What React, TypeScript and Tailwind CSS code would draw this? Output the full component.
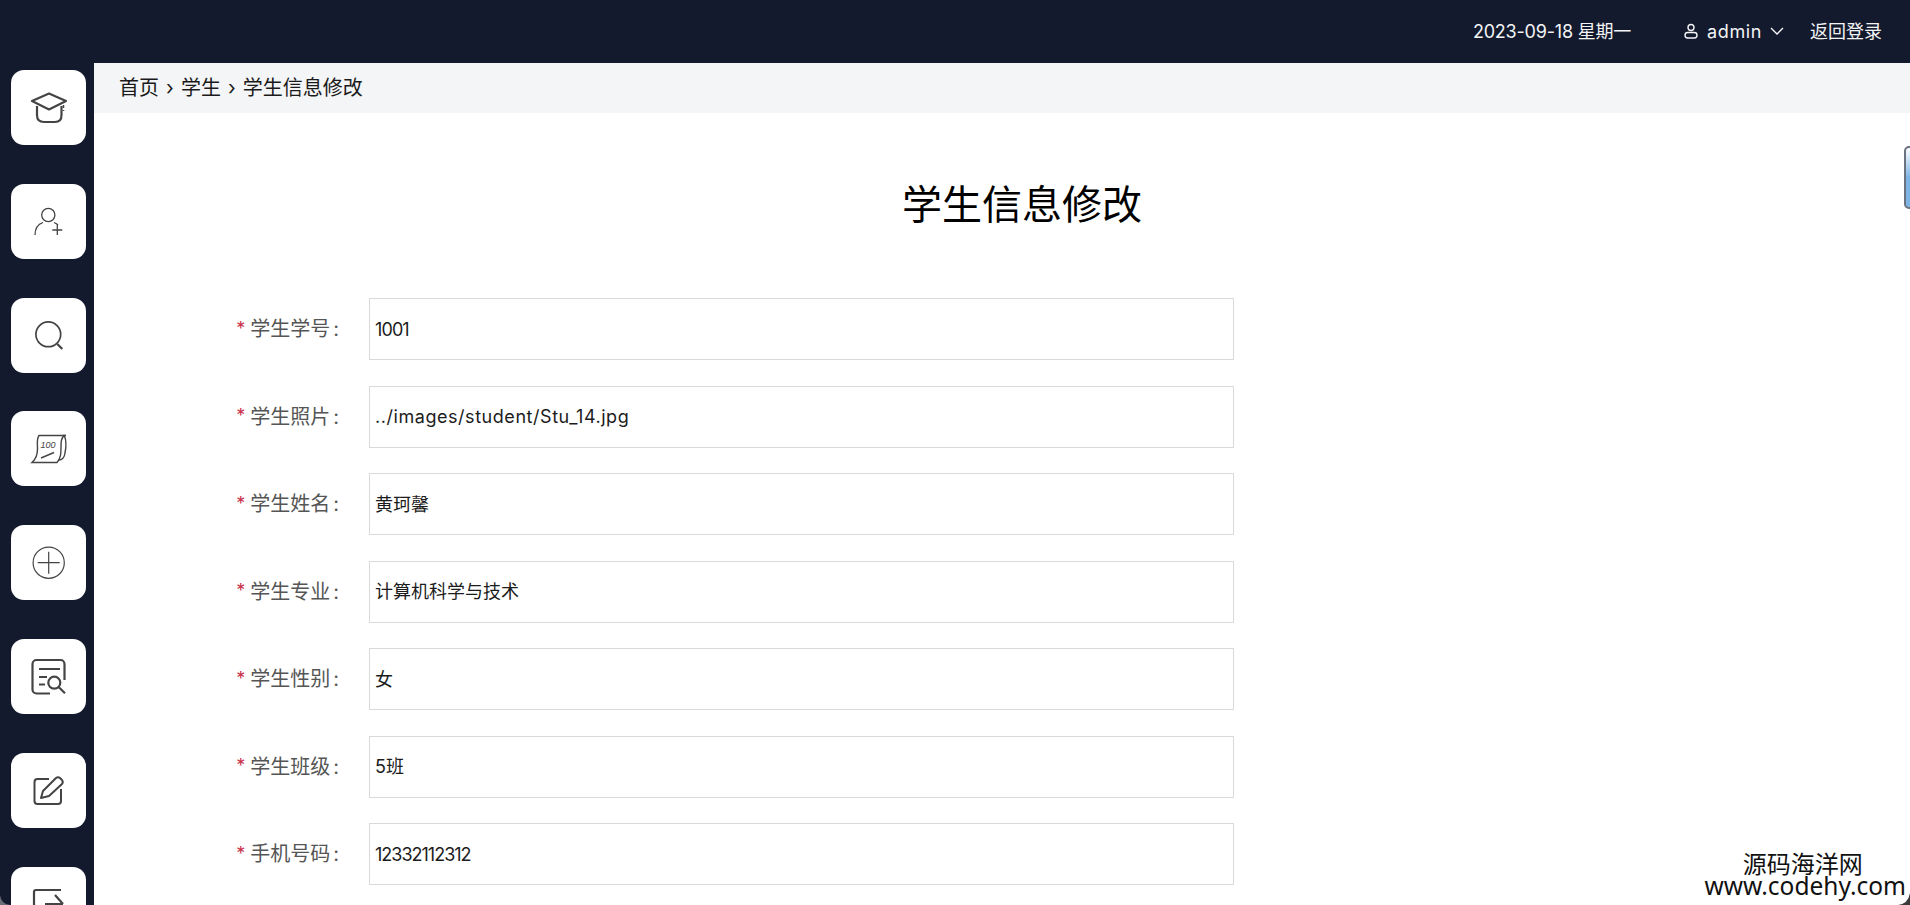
import React from 'react';

const font = 'font-["Inter","Noto_Sans_CJK_SC",sans-serif]';

const fields = [
  { label: '学生学号', value: '1001', valueClass: 'tracking-[-0.9px]' },
  { label: '学生照片', value: '../images/student/Stu_14.jpg', valueClass: 'tracking-[0.55px]' },
  { label: '学生姓名', value: '黄珂馨', valueClass: '' },
  { label: '学生专业', value: '计算机科学与技术', valueClass: '' },
  { label: '学生性别', value: '女', valueClass: '' },
  { label: '学生班级', value: '5班', valueClass: '' },
  { label: '手机号码', value: '12332112312', valueClass: 'tracking-[-1px]' },
];

const CapIcon = () => (
  <g strokeWidth="2.2">
    <path d="M38 23.5 L21 31 L38 39.5 L55 31 Z" strokeLinejoin="round" />
    <path d="M26 36 V45 Q26 52 33 52 H44 Q50.5 52 50.5 45 V36" />
    <path d="M52.5 35 V41" strokeDasharray="3 2" strokeWidth="1.5" />
  </g>
);

const UserPlusIcon = () => (
  <g strokeWidth="1.3">
    <circle cx="37.3" cy="31" r="6.6" />
    <path d="M24 51 C24 44 27.5 40 32 38.5 M43 38.5 C44.5 39.2 46 40 47 41" />
    <path d="M46.3 41 V51 M41.3 46 H51.3" />
  </g>
);

const SearchIcon = () => (
  <g strokeWidth="1.7">
    <circle cx="37.3" cy="36.3" r="12.4" />
    <path d="M46.3 46 L51.3 51" strokeWidth="2.2" />
  </g>
);

const ScrollIcon = () => (
  <g strokeWidth="1.4">
    <path d="M28 24.5 H53 C50 28 50 31 50 36 C50 42 50 47 46 51.5 H21 C25 48 26.5 44 26.5 38 C26.5 32 25.5 28 28 24.5 Z" />
    <path d="M52 24.5 H55 M53.5 25 C55.5 30 55 37 54 42 C53.5 46 52 49 47.5 49" />
    <text x="29.5" y="37" fontSize="9" fontStyle="italic" fill="#444" stroke="none" fontFamily="Liberation Sans, sans-serif">100</text>
    <path d="M30 47 L43 41.5" />
  </g>
);

const PlusCircleIcon = () => (
  <g strokeWidth="1.2">
    <circle cx="37.7" cy="37.7" r="15.6" />
    <path d="M37.7 26.7 V48.7 M26.7 37.7 H48.7" />
  </g>
);

const DocSearchIcon = () => (
  <g strokeWidth="2.2">
    <path d="M53.5 41 V25 a4 4 0 0 0 -4 -4 H25.5 a4 4 0 0 0 -4 4 V50.5 a4 4 0 0 0 4 4 H39" />
    <path d="M28 30 H49 M28 38 H36 M28 45.5 H34" />
    <circle cx="43.3" cy="43.7" r="6" />
    <path d="M47.6 48 L54 54.3" />
  </g>
);

const EditIcon = () => (
  <g strokeWidth="2">
    <path d="M38 26 H26.5 a3 3 0 0 0 -3 3 V48 a3 3 0 0 0 3 3 H47 a3 3 0 0 0 3 -3 V36" />
    <path d="M30 45 L32 38 L45 25 Q47 23.5 49 25 L51 27 Q52.5 29 51 31 L38 43 Z" strokeLinejoin="round" />
  </g>
);

const ExportIcon = () => (
  <g strokeWidth="2.2">
    <path d="M50 23 H25 a2 2 0 0 0 -2 2 V60" />
    <path d="M44 28 L52 37 M34 37 H52" />
  </g>
);

const sideIcons = [CapIcon, UserPlusIcon, SearchIcon, ScrollIcon, PlusCircleIcon, DocSearchIcon, EditIcon, ExportIcon];

export default function App() {
  return (
    <div className={`relative flex h-[905px] w-[1910px] flex-col overflow-hidden bg-[#141a2d] ${font}`}>
      {/* Top bar */}
      <header className="flex h-[63px] shrink-0 items-center justify-end pr-[28px] pb-[1px] text-[18px] text-[#f3f4f6]">
        <span className="tracking-[-0.2px]">2023-09-18 星期一</span>
        <div className="ml-[52px] flex items-center">
          <svg width="16" height="16" viewBox="0 0 16 16" fill="none" stroke="#f3f4f6" strokeWidth="1.4">
            <circle cx="8" cy="4.5" r="3" />
            <rect x="2" y="9.5" width="12" height="5.5" rx="2.7" />
          </svg>
          <span className="ml-[8px] tracking-[0.6px]">admin</span>
          <svg className="ml-[7px]" width="16" height="16" viewBox="0 0 16 16" fill="none" stroke="#f3f4f6" strokeWidth="1.4">
            <path d="M2 5 L8 11 L14 5" />
          </svg>
        </div>
        <span className="ml-[25px]">返回登录</span>
      </header>

      <div className="flex min-h-0 flex-1">
        {/* Icon rail */}
        <aside className="flex w-[94px] shrink-0 flex-col gap-[38.8px] pt-[7px] pl-[11px]">
          {sideIcons.map((Icon, i) => (
            <div key={i} className="h-[75px] w-[75px] shrink-0 rounded-[13px] bg-white">
              <svg width="75" height="75" viewBox="0 0 75 75" fill="none" stroke="#444444">
                <Icon />
              </svg>
            </div>
          ))}
        </aside>

        <main className="min-w-0 flex-1 bg-white">
          <div className="flex h-[50px] items-center bg-[#f4f5f6] pl-[25px] text-[20px] whitespace-pre text-[#1a1a1a] [word-spacing:1.5px]">
            首页 › 学生 › 学生信息修改
          </div>
          <h1 className="mt-[61px] ml-[808px] w-[240px] whitespace-nowrap text-[40px] leading-[62px] text-black">学生信息修改</h1>
          <form className="mt-[62px] flex flex-col gap-[25.5px]">
            {fields.map((f) => (
              <div key={f.label} className="flex h-[62px] items-center">
                <div className="flex w-[275px] shrink-0 items-center justify-end pr-[30px] text-[20px] text-[#555555]">
                  <span className="mr-[5px] -translate-y-[1px] text-[18px] text-[#c8324a]">*</span>
                  {f.label}
                  <span className="ml-[3px]">:</span>
                </div>
                <div className={`flex h-full w-[865px] items-center border border-[#d9d9d9] pl-[5px] text-[18px] text-[#1c1c1c] ${f.valueClass}`}>{f.value}</div>
              </div>
            ))}
          </form>
        </main>
      </div>

      {/* Stray widget at the right edge */}
      <div className="absolute top-[146px] left-[1904px] h-[63px] w-[12px] rounded-[5px] border-2 border-[#6b7280] bg-gradient-to-b from-white via-[#7db4e4] to-[#7db4e4]" />

      {/* Watermark */}
      <div className="absolute top-[854px] right-[4px] flex flex-col items-center bg-white leading-none text-[#111111]">
        <span className="pr-[5px] text-[24px] leading-[22px]">源码海洋网</span>
        <span className='font-["Noto_Sans",sans-serif] text-[24.5px] leading-[20px]'>www.codehy.com</span>
      </div>

      {/* Window corner wedges from the capture */}
      <svg className="absolute right-0 bottom-0" width="12" height="12" viewBox="0 0 12 12">
        <path d="M12 0 V12 H0 Q10 11 12 0 Z" fill="#3a3a3a" />
      </svg>
      <svg className="absolute bottom-0 left-0" width="10" height="10" viewBox="0 0 10 10">
        <path d="M0 0 V10 H10 Q1 9 0 0 Z" fill="#6b6f78" />
      </svg>
    </div>
  );
}
